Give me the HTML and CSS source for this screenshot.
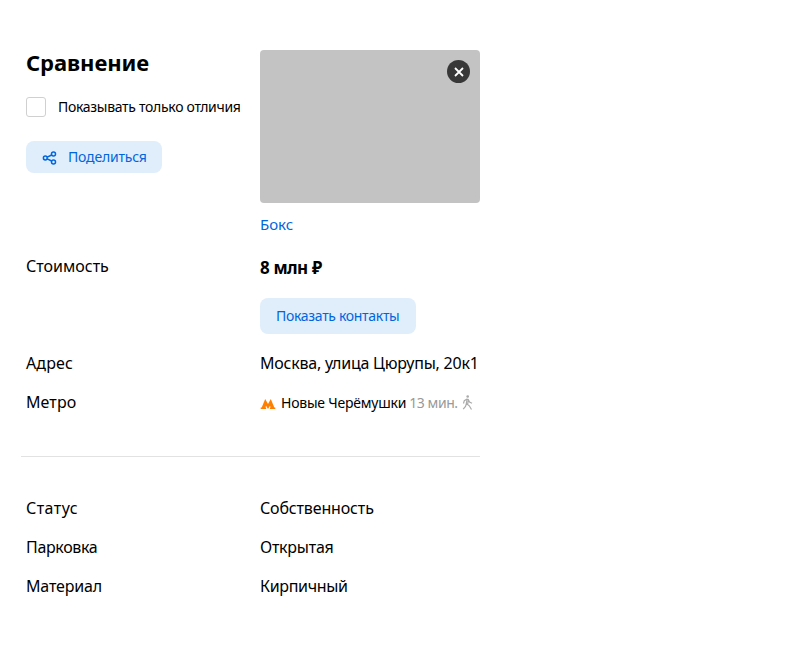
FILE: index.html
```
<!DOCTYPE html>
<html lang="ru">
<head>
<meta charset="utf-8">
<title>Сравнение</title>
<link rel="stylesheet" href="styles.css">
</head>
<body>
<main class="compare">
  <section class="row top">
    <div class="side">
      <h1 class="title"><span class="t t-title">Сравнение</span></h1>
      <label class="check"><span class="box"></span><span class="t t-check">Показывать только отличия</span></label>
      <button class="btn share">
        <svg class="share-icon" width="16" height="16" viewBox="0 0 16 16" fill="none" stroke="currentColor" stroke-width="1.5"><circle cx="3.300" cy="9" r="1.900"/><circle cx="11.500" cy="5" r="2"/><circle cx="11.500" cy="13" r="2"/><path d="M5.200 8.200l4.500-2.200M5.200 9.800l4.500 2.200"/></svg>
        <span class="t t-share">Поделиться</span>
      </button>
    </div>
    <div class="offer">
      <div class="photo">
        <button class="close"><svg width="23" height="23" viewBox="0 0 23 23" fill="none" stroke="#fff" stroke-width="1.8"><path d="M8 8l8 8M16 8l-8 8"/></svg></button>
      </div>
      <a class="link"><span class="t t-link">Бокс</span></a>
    </div>
  </section>
  <section class="row price-row">
    <div><span class="t t-cost">Стоимость</span></div>
    <div>
      <div class="price"><span class="t t-price">8 млн ₽</span></div>
      <button class="btn contacts"><span class="t t-contacts">Показать контакты</span></button>
    </div>
  </section>
  <section class="row line"><span class="t t-addr">Адрес</span><span class="t t-addrv">Москва, улица Цюрупы, 20к1</span></section>
  <section class="row line"><span class="t t-metro">Метро</span>
    <div class="metro">
      <svg class="m-icon" width="16" height="12" viewBox="0 0 16 12" fill="#ff8000"><path d="M5.200 1L8 6l2.800-5 3.500 8.600h1V11H9.900V9.600h.7L10 7.800 8 11 6 7.800l-.6 1.800h.7V11H.7V9.600h1z"/></svg>
      <span class="t t-station">Новые Черёмушки</span>
      <span class="t t-time">13 мин.</span>
      <svg class="walk" width="12" height="16" viewBox="0 0 12 16" fill="none" stroke="#aaa" stroke-width="1.200"><circle cx="5.700" cy="1.500" r="1.300" fill="#aaa" stroke="none"/><path d="M5.500 3.800L2.300 5.700 1.500 8.500M5.200 4L4.300 8.500l3 2.300L9.500 14.500M4.300 9L3.500 11.500 1.200 14.200M6 4l1.500 3L10 8.300M6.300 5.500L5.700 9"/></svg>
    </div>
  </section>
  <hr class="rule">
  <section class="row line"><span class="t t-status">Статус</span><span class="t t-own">Собственность</span></section>
  <section class="row line"><span class="t t-park">Парковка</span><span class="t t-open">Открытая</span></section>
  <section class="row line"><span class="t t-mat">Материал</span><span class="t t-brick">Кирпичный</span></section>
</main>
</body>
</html>
```
FILE: styles.css
```
* { box-sizing: border-box; }
body { margin: 0; background: #fff; color: #000; font: 16px/20px "Noto Sans", sans-serif; }
.compare { width: 480px; padding: 50px 0 0 26px; }
.row { display: grid; grid-template-columns: 234px 220px; }
.t { white-space: nowrap; justify-self: start; }
.top { height: 206px; }
.side { display: flex; flex-direction: column; align-items: flex-start; }
.title { margin: 0 0 23px; font-size: 22px; line-height: 24px; font-weight: 700; letter-spacing: -0.08px; }
.check { display: flex; gap: 12px; align-items: center; font-size: 14px; margin-bottom: 24px; }
.box { width: 20px; height: 20px; border: 1px solid #d0d0d0; border-radius: 3px; }
.btn { display: flex; align-items: center; border: 0; border-radius: 8px; background: #e0edfb; color: #0066dd; font: 14px/20px "Noto Sans", sans-serif; padding: 0 16px; white-space: nowrap; }
.share { width: 136px; height: 32px; gap: 10px; }
.share-icon { flex: none; }
.photo { display: flex; justify-content: flex-end; width: 220px; height: 153px; padding: 10px; background: #c3c3c3; border-radius: 4px; }
.close { width: 23px; height: 23px; padding: 0; border: 0; border-radius: 50%; background: #383838; }
.close svg { display: block; }
.link { display: block; margin-top: 11px; font-size: 15px; color: #0066dd; }
.price-row { height: 97px; }
.price { height: 42px; line-height: 23px; font-size: 17px; font-weight: 700; }
.contacts { width: 156px; height: 36px; }
.line { height: 39px; }
.metro { display: flex; align-items: center; height: 22px; font-size: 14px; white-space: nowrap; }
.m-icon { flex: none; margin: 1px 5px 0 0; }
.walk { flex: none; margin-left: 4px; }
.rule { height: 1px; border: 0; background: #e2e2e2; margin: 25px 0 41px -5px; }
.t-check { letter-spacing: -0.3px; }
.t-share { letter-spacing: -0.18px; }
.t-price { letter-spacing: -0.6px; word-spacing: 0.5px; }
.t-contacts { letter-spacing: -0.31px; }
.t-addr { letter-spacing: 0.15px; }
.t-metro { letter-spacing: 0.1px; }
.t-addrv { letter-spacing: -0.23px; }
.t-station { letter-spacing: -0.22px; margin-right: 3px; }
.t-time { letter-spacing: -0.42px; color: #999; }
.t-status { letter-spacing: 0.45px; }
.t-own { letter-spacing: -0.15px; }
.t-park { letter-spacing: -0.35px; }
.t-open { letter-spacing: -0.25px; }
.t-mat { letter-spacing: -0.15px; }
.t-brick { letter-spacing: -0.33px; }
```
